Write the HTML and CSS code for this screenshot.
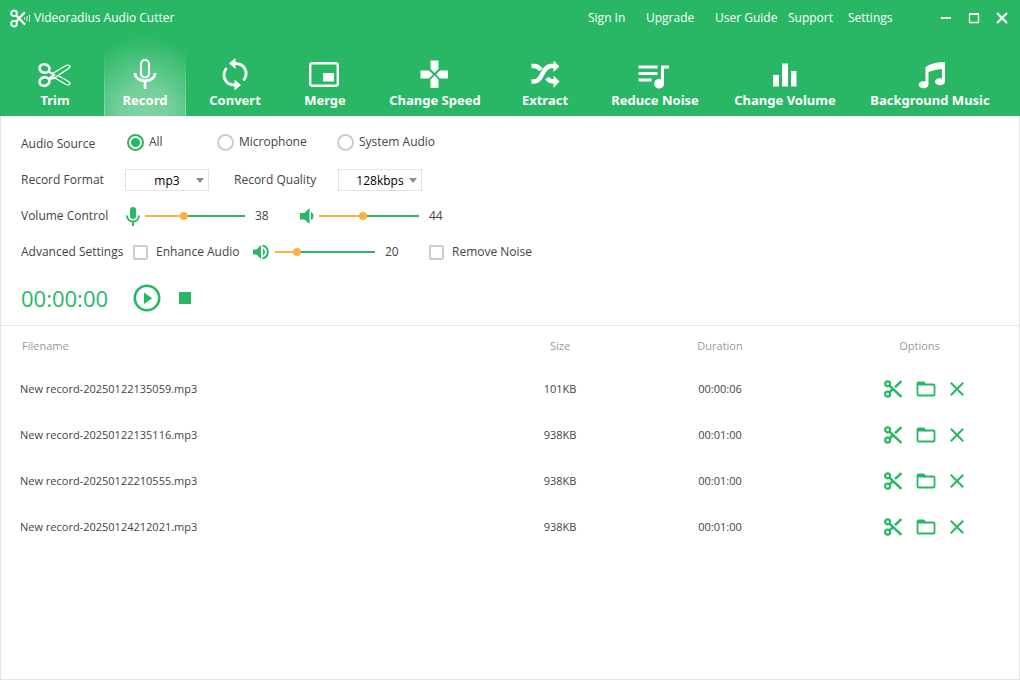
FILE: index.html
```html
<!DOCTYPE html>
<html lang="en">
<head>
<meta charset="utf-8">
<meta name="viewport" content="width=device-width, initial-scale=1">
<title>Videoradius Audio Cutter</title>
<link rel="stylesheet" href="styles.css">
</head>
<body>
<svg class="defs" width="0" height="0" aria-hidden="true">
  <symbol id="cut" viewBox="0 0 18 18">
    <g fill="none" stroke="currentColor" stroke-width="2.200"><circle cx="3.600" cy="3.800" r="2.500"/><circle cx="3.600" cy="14.200" r="2.500"/><path d="M5.500 5.600 17.400 16.900M5.500 12.400 9 9M11 7.100 17.400 1.100" stroke-width="2.600"/></g>
  </symbol>
  <symbol id="folder" viewBox="0 0 20 18">
    <path d="M1.500 14.500V3.500q0-1 1-1h5l2 2h8q1 0 1 1v9q0 1-1 1h-15q-1 0-1-1z" fill="none" stroke="currentColor" stroke-width="1.800"/><path d="M1.500 2h6.500l2 3.500H1.500z" fill="currentColor"/>
  </symbol>
  <symbol id="remove" viewBox="0 0 14 14">
    <path d="M.8.8 13.200 13.200M13.200.8.8 13.200" stroke="currentColor" stroke-width="2"/>
  </symbol>
</svg>
<div class="app">
  <header class="header">
    <div class="titlebar">
      <svg class="logo" viewBox="0 0 21 19" aria-hidden="true"><g fill="none" stroke="#fff"><circle cx="4" cy="4.300" r="2.800" stroke-width="1.900"/><circle cx="4" cy="14.700" r="2.800" stroke-width="1.900"/><path d="M6 6.300 15 15.500M6 12.700 8.500 10.200M9.500 8.800 15 3.200" stroke-width="2.300"/><path d="M14.500 8.500v2M17 7v5M19.500 6v7" stroke-width="1"/></g></svg>
      <h1 class="title">Videoradius Audio Cutter</h1>
      <nav class="menu">
        <a class="menu-signin" href="#">Sign In</a>
        <a class="menu-upgrade" href="#">Upgrade</a>
        <a class="menu-guide" href="#">User Guide</a>
        <a class="menu-support" href="#">Support</a>
        <a class="menu-settings" href="#">Settings</a>
      </nav>
      <div class="window-buttons">
        <button type="button" aria-label="Minimize"><svg viewBox="0 0 12 12"><path d="M1 6h10" stroke="#fff" stroke-width="2"/></svg></button>
        <button type="button" aria-label="Maximize"><svg viewBox="0 0 12 12"><path d="M1.500 2h9v8.500h-9z" fill="none" stroke="#fff" stroke-width="1.300"/><path d="M1 2h10" stroke="#fff" stroke-width="2"/></svg></button>
        <button type="button" aria-label="Close"><svg viewBox="0 0 12 12"><path d="M1 1l10 10M11 1 1 11" stroke="#fff" stroke-width="2.200"/></svg></button>
      </div>
    </div>
    <nav class="toolbar">
      <button type="button" class="tool">
        <svg viewBox="0 0 34 32"><g fill="none" stroke="#fff"><ellipse cx="6.500" cy="11.500" rx="5" ry="4.200" stroke-width="2.600" transform="rotate(18 6.500 11.500)"/><ellipse cx="6.500" cy="24.500" rx="5" ry="4.200" stroke-width="2.600" transform="rotate(-18 6.500 24.500)"/><path d="M14.500 16.500 28 8.500q2.500-.8 4 .5 0 1.500-1.500 2.500L15.500 21.500 11.500 22M14.500 19.500 28 27.500q2.500.8 4-.5 0-1.500-1.500-2.500L20 18.500" stroke-width="1.300"/><path d="M11 14.500 16 18 11 21.500" stroke-width="2"/></g></svg>
        <span>Trim</span></button>
      <button type="button" class="tool tool-active" aria-pressed="true">
        <svg viewBox="0 0 34 32"><g fill="none" stroke="#fff" stroke-width="2.200"><rect x="13" y="3" width="8" height="17.500" rx="4"/><path d="M7 16c0 10.500 20 10.500 20 0M17 24v8" stroke-width="2.600"/></g></svg>
        <span>Record</span></button>
      <button type="button" class="tool">
        <svg viewBox="0 0 34 32"><g fill="none" stroke="#fff" stroke-width="2.800"><path d="M17 6.500c10 0 14 9.500 8.500 17M17 28c-10 0-14-9.500-8.500-17"/></g><path d="M17.500 1v11l-6.500-5.500zM16.500 22.500v11l6.500-5.500z" fill="#fff"/></svg>
        <span>Convert</span></button>
      <button type="button" class="tool">
        <svg viewBox="0 0 34 32"><rect x="2.200" y="6.200" width="27.600" height="22.600" rx="2" fill="none" stroke="#fff" stroke-width="2.400"/><path d="M15 16h11v8.500H15z" fill="#fff"/></svg>
        <span>Merge</span></button>
      <button type="button" class="tool tool-wide">
        <svg viewBox="0 0 34 32"><path d="M12.500 3.500h8V12l-4 4-4-4zM12.500 31h8v-8.500l-4-4-4 4zM2.500 13.500H11l4 4-4 4H2.500zM30 13.500h-8l-4 4 4 4h8z" fill="#fff"/></svg>
        <span>Change Speed</span></button>
      <button type="button" class="tool">
        <svg viewBox="0 0 34 32"><g fill="none" stroke="#fff" stroke-width="4.500"><path d="M3.500 9H6c3.500 0 5.500 2 7 4M19 21c2 3 4 3.500 8 3.500M3.500 24.500H6c9 0 8-15.500 17-15.500h3"/></g><path d="M25.500 3.500 31.500 9.500 25.500 15zM25.500 18.500 31.500 24.500 25.500 31z" fill="#fff"/></svg>
        <span>Extract</span></button>
      <button type="button" class="tool tool-wide">
        <svg viewBox="0 0 34 32"><path d="M.5 8.500h19v3H.5zM.5 15h19v3H.5zM.5 21.500h13v3H.5z" fill="#fff"/><path d="M23 8.500h8v3h-5v15a4.900 4.900 0 1 1-3-4.300z" fill="#fff"/></svg>
        <span>Reduce Noise</span></button>
      <button type="button" class="tool tool-wide">
        <svg viewBox="0 0 34 32"><path d="M5 18h6v11.500H5zM14 6.500h6v23h-6zM23 14h5.500v15.500H23z" fill="#fff"/></svg>
        <span>Change Volume</span></button>
      <button type="button" class="tool tool-widest">
        <svg viewBox="0 0 34 32"><path d="M12.500 10Q20 5 32 5v19.500a5 3.500 0 1 1-3-3V12q-7 .5-13.500 3v12.500a5 3.500 0 1 1-3-3z" fill="#fff"/></svg>
        <span>Background Music</span></button>
    </nav>
  </header>

  <main class="content">
    <form class="settings">
      <div class="row" role="radiogroup" aria-labelledby="source">
        <span class="row-label" id="source">Audio Source</span>
        <div class="radios">
          <label class="radio radio-first"><input type="radio" name="source" checked>All</label>
          <label class="radio radio-mid"><input type="radio" name="source">Microphone</label>
          <label class="radio"><input type="radio" name="source">System Audio</label>
        </div>
      </div>
      <div class="row">
        <label class="row-label" for="format">Record Format</label>
        <div class="select"><select id="format"><option>mp3</option><option>wav</option></select><svg viewBox="0 0 8 5" aria-hidden="true"><path d="M0 0h8L4 5z" fill="#8c8c8c"/></svg></div>
        <label class="row-label row-label-second" for="quality">Record Quality</label>
        <div class="select"><select id="quality"><option>128kbps</option><option>320kbps</option></select><svg viewBox="0 0 8 5" aria-hidden="true"><path d="M0 0h8L4 5z" fill="#8c8c8c"/></svg></div>
      </div>
      <div class="row">
        <span class="row-label">Volume Control</span>
        <div class="volume">
          <svg class="volume-icon" viewBox="0 0 16 20" aria-hidden="true"><rect x="5" y="1" width="6" height="12" rx="3" fill="#29b765"/><path d="M2 9.500c0 8 12 8 12 0M8 15v5" fill="none" stroke="#29b765" stroke-width="2"/></svg>
          <input type="range" aria-label="Microphone volume" min="0" max="100" value="38" style="--value:38%">
          <output>38</output>
        </div>
        <div class="volume">
          <svg class="volume-icon" viewBox="0 0 16 20" aria-hidden="true"><path d="M1 7h4.500L10.500 2v16L5.500 13.500H1zM12 6q2.500 1 2.500 4T12 14z" fill="#29b765"/></svg>
          <input type="range" aria-label="System volume" min="0" max="100" value="44" style="--value:44%">
          <output>44</output>
        </div>
      </div>
      <div class="row">
        <span class="row-label row-label-advanced">Advanced Settings</span>
        <label class="check check-enhance"><input type="checkbox">Enhance Audio</label>
        <div class="volume">
          <svg class="volume-icon volume-icon-wide" viewBox="0 0 18 20" aria-hidden="true"><path d="M0 7.500h3.500L8 3v14l-4.500-4.500H0zM10 6.500q2 1 2 3.500t-2 3.500z" fill="#29b765"/><path d="M9.500 3.500c7 1.500 7 11.500 0 13" fill="none" stroke="#29b765" stroke-width="2"/></svg>
          <input type="range" aria-label="Enhancement level" min="0" max="100" value="20" style="--value:20%">
          <output>20</output>
        </div>
        <label class="check"><input type="checkbox">Remove Noise</label>
      </div>
      <div class="recorder">
        <time class="timer">00:00:00</time>
        <button type="button" class="play" aria-label="Start recording"><svg viewBox="0 0 28 28"><circle cx="14" cy="14" r="12.200" fill="none" stroke="#29b765" stroke-width="2.600"/><path d="M11 8.500v11.500l8.200-5.700z" fill="#29b765"/></svg></button>
        <button type="button" class="stop" aria-label="Stop recording"></button>
      </div>
    </form>

    <table class="files">
      <colgroup><col><col class="col-size"><col class="col-duration"><col class="col-options"></colgroup>
      <thead><tr><th class="name">Filename</th><th>Size</th><th>Duration</th><th class="options-head">Options</th></tr></thead>
      <tbody>
        <tr><td class="name">New record-20250122135059.mp3</td><td>101KB</td><td>00:00:06</td><td><div class="actions"><button type="button" aria-label="Trim"><svg class="i-cut"><use href="#cut"/></svg></button><button type="button" aria-label="Open folder"><svg class="i-folder"><use href="#folder"/></svg></button><button type="button" aria-label="Delete"><svg class="i-remove"><use href="#remove"/></svg></button></div></td></tr>
        <tr><td class="name">New record-20250122135116.mp3</td><td>938KB</td><td>00:01:00</td><td><div class="actions"><button type="button" aria-label="Trim"><svg class="i-cut"><use href="#cut"/></svg></button><button type="button" aria-label="Open folder"><svg class="i-folder"><use href="#folder"/></svg></button><button type="button" aria-label="Delete"><svg class="i-remove"><use href="#remove"/></svg></button></div></td></tr>
        <tr><td class="name">New record-20250122210555.mp3</td><td>938KB</td><td>00:01:00</td><td><div class="actions"><button type="button" aria-label="Trim"><svg class="i-cut"><use href="#cut"/></svg></button><button type="button" aria-label="Open folder"><svg class="i-folder"><use href="#folder"/></svg></button><button type="button" aria-label="Delete"><svg class="i-remove"><use href="#remove"/></svg></button></div></td></tr>
        <tr><td class="name">New record-20250124212021.mp3</td><td>938KB</td><td>00:01:00</td><td><div class="actions"><button type="button" aria-label="Trim"><svg class="i-cut"><use href="#cut"/></svg></button><button type="button" aria-label="Open folder"><svg class="i-folder"><use href="#folder"/></svg></button><button type="button" aria-label="Delete"><svg class="i-remove"><use href="#remove"/></svg></button></div></td></tr>
      </tbody>
    </table>
  </main>
</div>
</body>
</html>
```
FILE: styles.css
```css
:root {
  --green: #29b765;
  --orange: #ffb042;
}
* { box-sizing: border-box; }
body {
  margin: 0;
  font: 12px/16px "Open Sans", "Noto Sans", sans-serif;
  color: #444;
  background: #fff;
}
button { padding: 0; border: 0; background: none; color: inherit; font: inherit; }
input { margin: 0; }
svg { display: block; }
.defs { position: absolute; }
.app { display: flex; flex-direction: column; min-height: 100vh; }

/* Header */
.header { background: var(--green); color: #fff; }
.titlebar { display: flex; align-items: center; height: 36px; padding: 0 12px 0 10px; }
.logo { width: 21px; height: 19px; }
.title { margin: 0 auto 0 3px; font-size: 12px; font-weight: 400; }
.menu { display: flex; }
.menu a { color: inherit; text-decoration: none; white-space: nowrap; }
.menu-signin { width: 58px; }
.menu-upgrade { width: 69px; }
.menu-guide { width: 73px; }
.menu-support { width: 60px; }
.menu-settings { width: 92px; }
.window-buttons { display: flex; gap: 16px; }
.window-buttons svg { width: 12px; height: 12px; }

.toolbar { display: flex; gap: 8px; padding: 0 14px; }
.tool {
  display: flex;
  flex: 82 1 0;
  flex-direction: column;
  align-items: center;
  gap: 2px;
  height: 80px;
  padding-top: 21px;
  font-family: "Noto Sans", "Open Sans", sans-serif;
  font-size: 13px;
  font-weight: 700;
  line-height: 18px;
  white-space: nowrap;
}
.tool svg { width: 34px; height: 32px; overflow: visible; }
.tool-wide { flex-grow: 122; }
.tool-widest { flex-grow: 152; }
.tool-active {
  background:
    linear-gradient(#fff0 20%, #ffffff50) left / 1px 100% no-repeat,
    linear-gradient(#fff0 20%, #ffffff50) right / 1px 100% no-repeat,
    radial-gradient(ellipse 90% 100% at 50% 100%, #7dd4a2 0%, #74d09b 35%, #29b76500 100%);
}

/* Settings */
.content { flex: 1; border: 1px solid #e3e3e3; border-top: 0; }
.settings {
  display: flex;
  flex-direction: column;
  gap: 12px;
  padding: 16px 20px 5px;
  border-bottom: 1px solid #e6e6e6;
}
.row { display: flex; align-items: center; height: 24px; white-space: nowrap; }
.row-label { width: 104px; }
.row-label-second { margin-left: 25px; }
.row-label-advanced { width: 112px; }
.radios { display: flex; padding: 0 0 4px 2px; }
.radio { display: flex; align-items: center; gap: 5px; }
.radio-first { width: 90px; }
.radio-mid { width: 120px; }
.radio input {
  appearance: none;
  width: 17px;
  height: 17px;
  border: 2px solid #ccc;
  border-radius: 50%;
  background: #fff;
}
.radio input:checked {
  border-color: var(--green);
  background: radial-gradient(circle, var(--green) 4px, #fff 5px);
}
.select { display: grid; width: 84px; height: 22px; }
.select select {
  grid-area: 1 / 1;
  appearance: none;
  border: 1px solid #e2e2e2;
  border-radius: 0;
  padding: 2px 0 0;
  background: #fff;
  color: #000;
  font: inherit;
  text-align-last: center;
}
.select svg {
  grid-area: 1 / 1;
  place-self: center end;
  width: 8px;
  height: 5px;
  margin-right: 5px;
  pointer-events: none;
}
.volume { display: flex; align-items: center; }
.volume-icon { width: 16px; height: 20px; margin-right: 4px; }
.volume-icon-wide { width: 18px; }
.volume input {
  appearance: none;
  width: 100px;
  height: 16px;
  background: linear-gradient(to right, var(--orange) var(--value), var(--green) var(--value)) center / 100% 2px no-repeat;
}
.volume input::-webkit-slider-thumb {
  appearance: none;
  width: 8px;
  height: 8px;
  border-radius: 50%;
  background: var(--orange);
}
.volume output { width: 44px; margin-left: 10px; }
.check { display: flex; align-items: center; gap: 8px; }
.check-enhance { width: 120px; }
.check input {
  appearance: none;
  width: 15px;
  height: 15px;
  border: 2px solid #ccc;
  border-radius: 2px;
  background: #fff;
}
.recorder { display: flex; align-items: center; height: 44px; }
.timer { width: 112px; color: var(--green); font-size: 22px; line-height: 28px; }
.play svg { width: 28px; height: 28px; }
.stop { width: 12px; height: 12px; margin-left: 18px; background: var(--green); }

/* File list */
.files { width: 100%; border-collapse: collapse; table-layout: fixed; font-size: 11px; }
.col-size, .col-duration { width: 160px; }
.col-options { width: 219px; }
.files th { height: 40px; padding: 0; color: #999; font-weight: 400; text-align: center; }
.files td { height: 46px; padding: 0; text-align: center; }
.files th.name { padding-left: 21px; text-align: left; }
.files td.name { padding-left: 19px; text-align: left; }
.files th.options-head { padding-left: 20px; }
.actions { display: flex; justify-content: center; align-items: center; gap: 14px; padding-left: 28px; color: var(--green); }
.i-cut { width: 18px; height: 18px; }
.i-folder { width: 20px; height: 18px; }
.i-remove { width: 14px; height: 14px; }
```
